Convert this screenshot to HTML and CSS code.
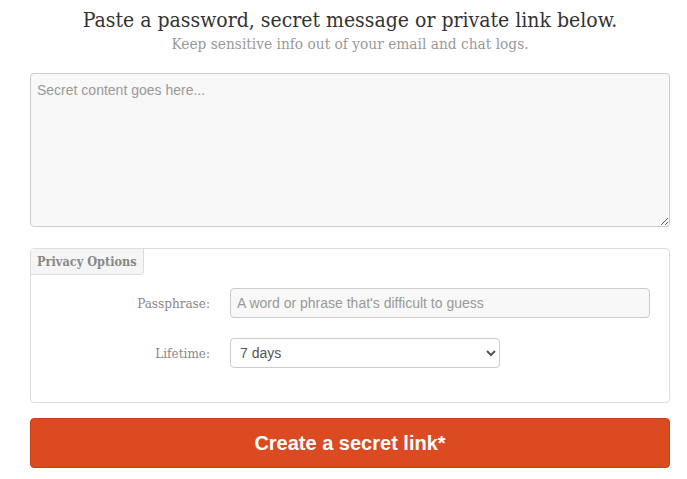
FILE: index.html
```html
<!DOCTYPE html>
<html>
<head>
  <meta charset="utf-8">
  <title>Share a secret</title>
  <link rel="stylesheet" href="styles.css">
</head>
<body>
  <div class="page">
    <h1 class="title">Paste a password, secret message or private link below.</h1>
    <p class="subtitle">Keep sensitive info out of your email and chat logs.</p>

    <form class="secret-form">
      <textarea class="secret" placeholder="Secret content goes here..."></textarea>

      <fieldset class="options">
        <legend class="options-legend">Privacy Options</legend>
        <div class="row">
          <label class="row-label" for="passphrase">Passphrase:</label>
          <input class="passphrase" id="passphrase" type="text" placeholder="A word or phrase that's difficult to guess">
        </div>
        <div class="row">
          <label class="row-label" for="ttl">Lifetime:</label>
          <select class="lifetime" id="ttl">
            <option>7 days</option>
          </select>
        </div>
      </fieldset>

      <button class="submit" type="button">Create a secret link*</button>
    </form>
  </div>
</body>
</html>
```

FILE: styles.css
```css
body {
  margin: 0;
  background: #fff;
  font-family: "DejaVu Serif", Georgia, serif;
  font-stretch: condensed;
}

.page {
  width: 640px;
  margin: 0 0 0 30px;
  padding: 5px 0 0;
}

.title {
  margin: 0;
  text-align: center;
  font-weight: normal;
  font-size: 21px;
  line-height: 30px;
  color: #333;
}

.subtitle {
  margin: 0 0 20px;
  text-align: center;
  font-size: 15.3px;
  line-height: 18px;
  color: #999;
}

.secret-form {
  margin: 0;
}

.secret {
  display: block;
  box-sizing: border-box;
  width: 100%;
  height: 154px;
  margin: 0 0 21px;
  padding: 8px 6px;
  border: 1px solid #ccc;
  border-radius: 4px;
  background: #f8f8f8;
  font-family: "Liberation Sans", Arial, sans-serif;
  font-stretch: normal;
  font-size: 14px;
  color: #555;
  resize: vertical;
}

.secret::placeholder,
.passphrase::placeholder {
  color: #999;
}

.options {
  position: relative;
  box-sizing: border-box;
  height: 155px;
  margin: 0 0 15px;
  padding: 39px 0 0;
  border: 1px solid #ddd;
  border-radius: 4px;
}

.options-legend {
  position: absolute;
  top: 0;
  left: 0;
  padding: 4px 6px;
  border: 1px solid #ddd;
  border-top: 0;
  border-left: 0;
  border-radius: 0 0 4px 0;
  background: #f5f5f5;
  font-size: 12.6px;
  font-weight: bold;
  line-height: 17px;
  color: #888;
}

.row {
  display: flex;
  align-items: center;
  margin: 0 0 20px;
}

.row-label {
  width: 179px;
  margin-right: 20px;
  text-align: right;
  font-size: 13.4px;
  color: #888;
}

.passphrase,
.lifetime {
  box-sizing: border-box;
  height: 30px;
  padding: 4px 6px;
  border: 1px solid #ccc;
  border-radius: 4px;
  font-family: "Liberation Sans", Arial, sans-serif;
  font-stretch: normal;
  font-size: 14px;
  color: #555;
}

.passphrase {
  width: 420px;
  background: #f8f8f8;
}

.lifetime {
  width: 270px;
  background: #fff;
  padding-left: 5px;
}

.submit {
  display: block;
  width: 100%;
  height: 50px;
  border: 1px solid #c5401b;
  border-radius: 4px;
  background: #db4a21;
  color: #fff;
  font-family: "Liberation Sans", Arial, sans-serif;
  font-stretch: normal;
  font-size: 20px;
  font-weight: bold;
  cursor: pointer;
}
```
